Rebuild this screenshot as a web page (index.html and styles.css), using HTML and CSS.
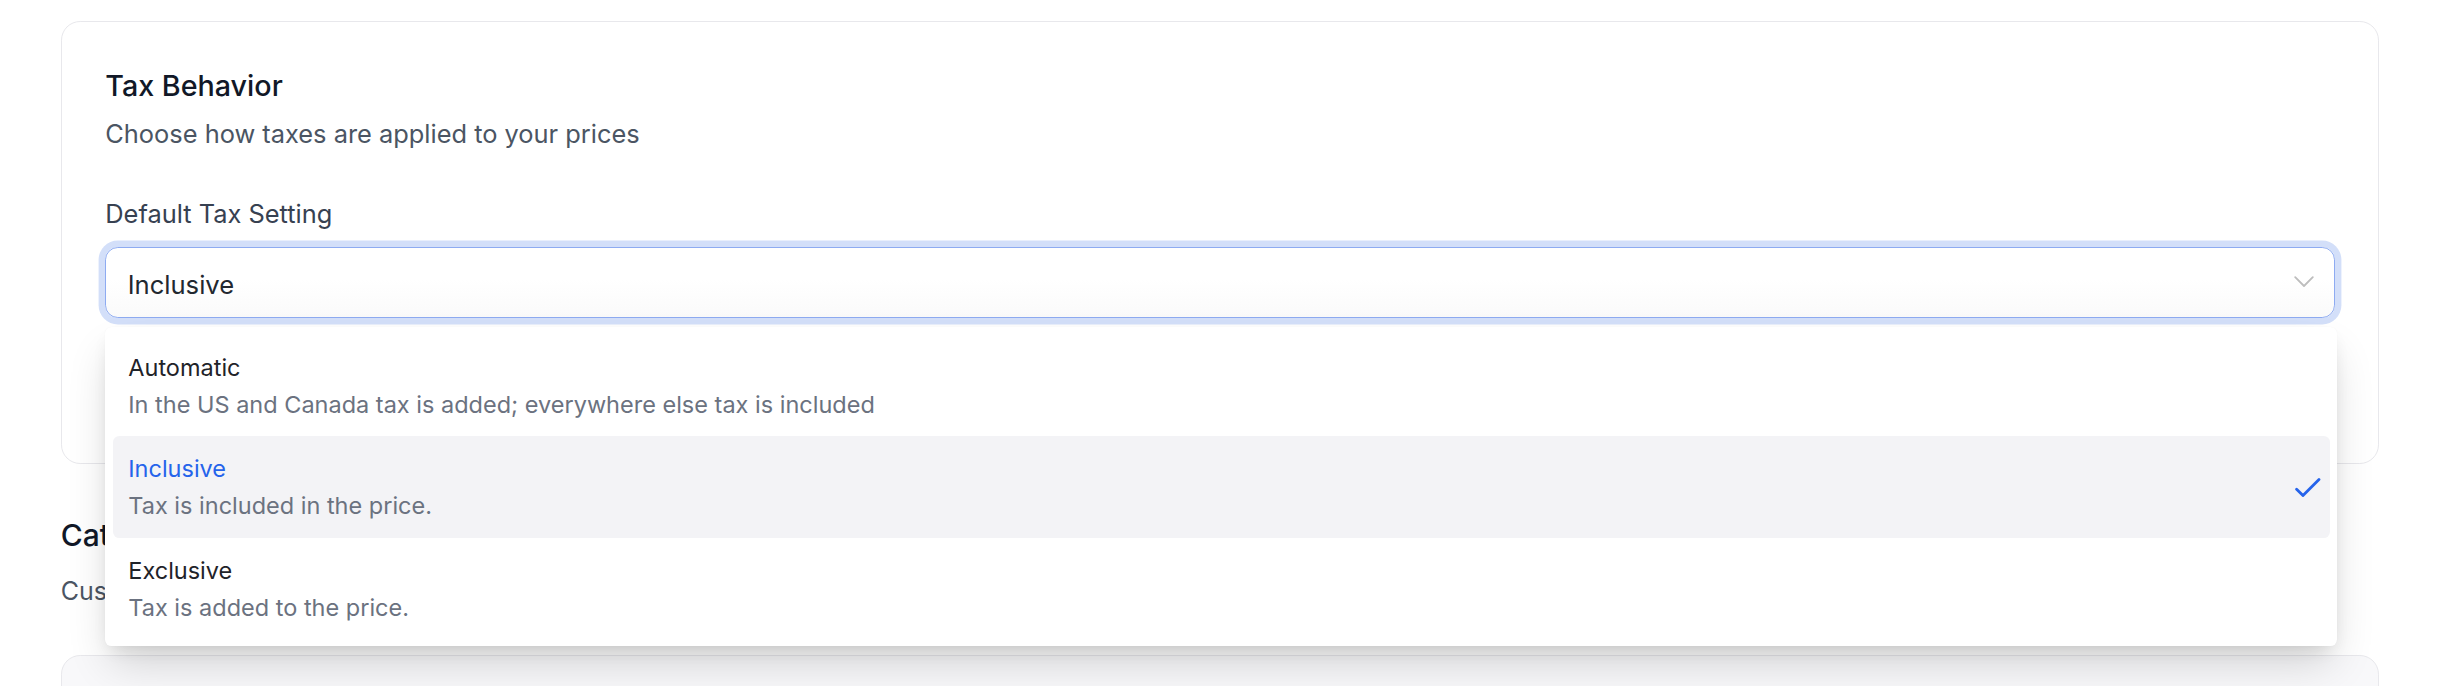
FILE: index.html
```html
<!DOCTYPE html>
<html lang="en">
<head>
<meta charset="utf-8">
<title>Tax Behavior</title>
<link rel="stylesheet" href="styles.css">
</head>
<body>
<main class="page">
  <section class="card">
    <h2 class="card-title">Tax Behavior</h2>
    <p class="card-desc">Choose how taxes are applied to your prices</p>
    <div class="field">
      <label class="field-label">Default Tax Setting</label>
      <div class="select-wrap">
        <button class="select" type="button">
          <span class="select-value">Inclusive</span>
          <svg class="chevron" width="20" height="12" viewBox="0 0 20 12" aria-hidden="true">
            <polyline points="1.2,1.2 10,10 18.8,1.2" fill="none" stroke="#bdbdbd" stroke-width="1.8" stroke-linecap="round" stroke-linejoin="round"/>
          </svg>
        </button>
        <ul class="listbox">
          <li class="option">
            <div class="option-text">
              <span class="option-title">Automatic</span>
              <span class="option-desc">In the US and Canada tax is added; everywhere else tax is included</span>
            </div>
          </li>
          <li class="option option-active">
            <div class="option-text">
              <span class="option-title">Inclusive</span>
              <span class="option-desc">Tax is included in the price.</span>
            </div>
            <svg class="check" width="25.6" height="19.2" viewBox="4 6 16 12" aria-hidden="true">
              <path d="M5 13l4 4L19 7" fill="none" stroke="#2563eb" stroke-width="1.75" stroke-linecap="round" stroke-linejoin="round"/>
            </svg>
          </li>
          <li class="option">
            <div class="option-text">
              <span class="option-title">Exclusive</span>
              <span class="option-desc">Tax is added to the price.</span>
            </div>
          </li>
        </ul>
      </div>
      <div class="note"></div>
    </div>
  </section>

  <section class="section-head">
    <h2 class="section-title">Categories</h2>
    <p class="section-desc">Customize how categories are displayed</p>
  </section>

  <section class="card card-muted"></section>
</main>
</body>
</html>
```

FILE: styles.css
```css
html, body {
  margin: 0;
  padding: 0;
  background: #ffffff;
  overflow: hidden;
  height: 686px;
}

body {
  font-family: Inter, "Noto Sans", "Liberation Sans", sans-serif;
  -webkit-font-smoothing: antialiased;
}

.page {
  padding: 20.7px 76.7px 0 60.7px;
  display: flex;
  flex-direction: column;
}

.card {
  border: 1.6px solid #e8e8ec;
  border-radius: 19.2px;
  background: #ffffff;
  padding: 44px 43px 43.4px 43.6px;
}

.card-title {
  margin: 0;
  font-size: 28.7px;
  line-height: 40px;
  font-weight: 500;
  color: #111827;
}

.card-desc {
  margin: 10px 0 0;
  font-size: 25.4px;
  line-height: 36px;
  font-weight: 400;
  color: #4b5563;
}

.field {
  margin-top: 44px;
  display: flex;
  flex-direction: column;
}

.field-label {
  font-size: 25.4px;
  line-height: 36px;
  font-weight: 400;
  color: #374151;
}

.select-wrap {
  position: relative;
  margin-top: 15.5px;
}

.select {
  width: 100%;
  height: 70.4px;
  box-sizing: border-box;
  display: flex;
  align-items: center;
  justify-content: space-between;
  padding: 0 20.8px 0 21.4px;
  border: 1.6px solid #8eabf1;
  border-radius: 12.8px;
  background: linear-gradient(#ffffff 0%, #ffffff 45%, #fafafa 100%);
  box-shadow: 0 0 0 6.4px #d3dff9;
  font-family: inherit;
  font-size: 25.6px;
  line-height: 36px;
  color: #222830;
  text-align: left;
  cursor: pointer;
}

.select-value {
  padding-top: 5px;
}

.chevron {
  display: block;
  flex: none;
}

.listbox {
  position: absolute;
  z-index: 10;
  top: calc(100% + 9.3px);
  left: 0;
  width: calc(100% + 1.7px);
  box-sizing: border-box;
  margin: 0;
  padding: 8px 7px 6.3px 8px;
  list-style: none;
  background: #ffffff;
  border-radius: 6.4px;
  box-shadow: 0 22px 44px -6px rgba(0, 0, 0, 0.16), 0 8px 18px -6px rgba(0, 0, 0, 0.12), 0 0 1px rgba(0, 0, 0, 0.05);
}

.option {
  display: flex;
  align-items: center;
  justify-content: space-between;
  padding: 15px 9px 13.5px 15px;
  border-radius: 6.4px;
}

.option-active {
  background: #f3f3f6;
}

.option-text {
  display: flex;
  flex-direction: column;
}

.option-title {
  font-size: 23.5px;
  line-height: 36px;
  color: #1f2329;
}

.option-active .option-title {
  color: #2563eb;
}

.option-desc {
  font-size: 23.5px;
  line-height: 37px;
  color: #6b7280;
}

.check {
  display: block;
  flex: none;
}

.note {
  margin-top: 31px;
  height: 71px;
  box-sizing: border-box;
  border: 1.6px solid #c6d4f6;
  border-radius: 9.6px;
  background: #f7f9ff;
}

.section-head {
  margin-top: 51px;
}

.section-title {
  margin: 0;
  font-size: 30px;
  line-height: 40px;
  font-weight: 500;
  color: #111827;
}

.section-desc {
  margin: 18.4px 0 0;
  font-size: 25px;
  line-height: 36px;
  color: #4b5563;
}

.card-muted {
  margin-top: 45.4px;
  height: 220px;
  padding: 0;
  background: #f8f8fa;
}
```
